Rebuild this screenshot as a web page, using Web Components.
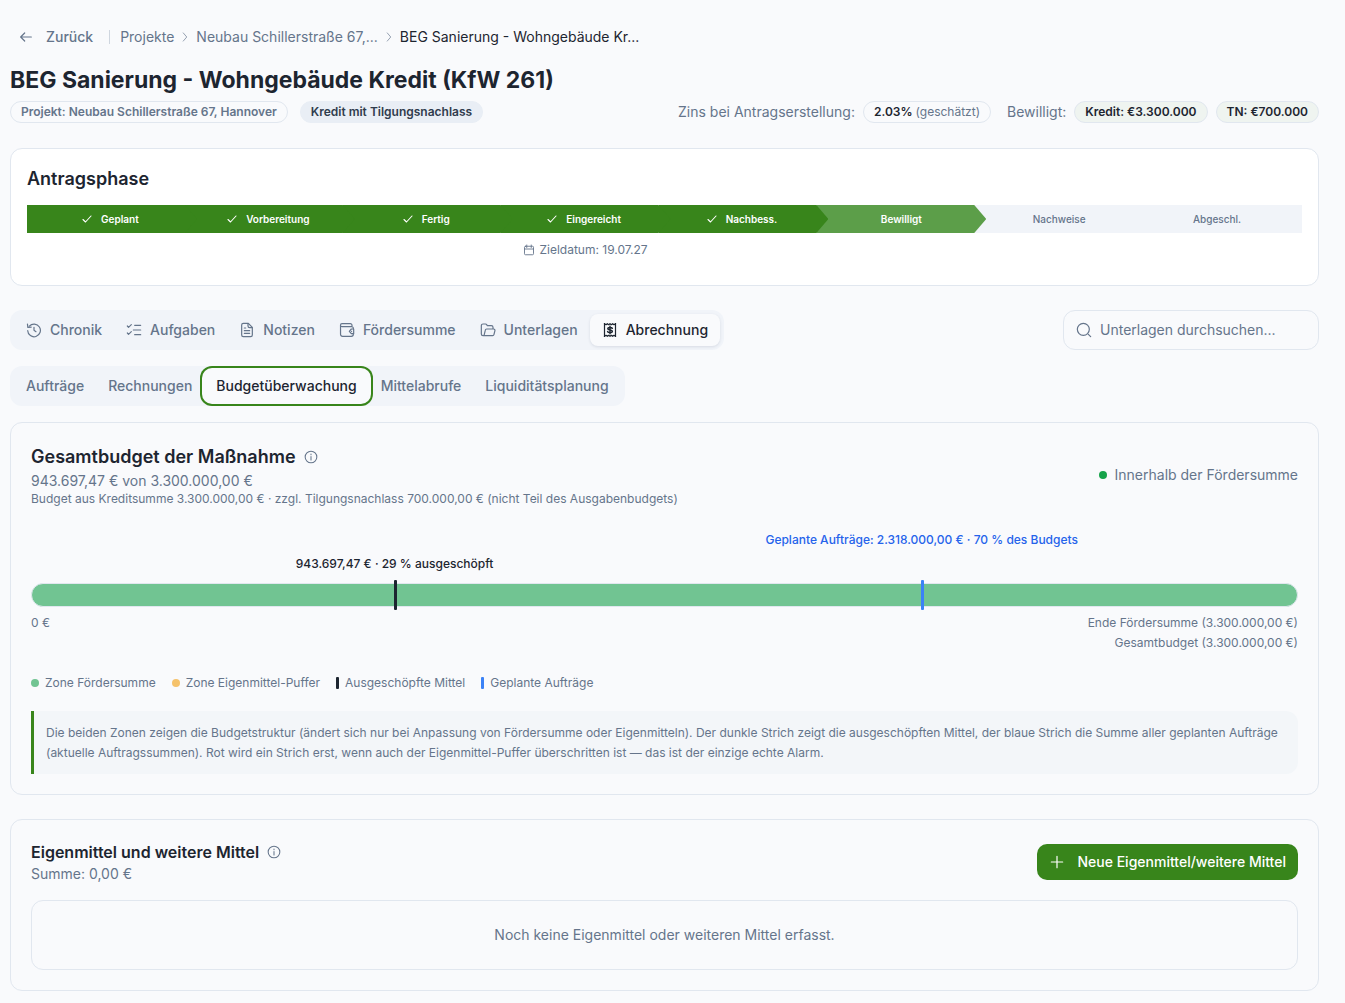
<!DOCTYPE html>
<html lang="de">
<head>
<meta charset="utf-8">
<meta name="viewport" content="width=device-width, initial-scale=1">
<title>BEG Sanierung - Wohngebäude Kredit (KfW 261)</title>
<style>
:root{
  --bg:#f9fafc; --fg:#1d2530; --muted:#65758b; --line:#e1e7ef; --soft:#f1f4f9;
  --green:#38851b; --green-light:#5c9e49; --zone:#71c492; --blue:#3b82f6;
}
body{margin:0;background:var(--bg);color:var(--fg);font:14px/20px Inter,"Liberation Sans",sans-serif}
</style>
</head>
<body>
<grant-page></grant-page>

<script>
const base = '*{box-sizing:border-box}button,input{font:inherit;color:inherit}button{margin:0;border:0;background:none;cursor:pointer}a{color:inherit;text-decoration:none}h1,h2,p{margin:0}';
function component(name, css, html) {
  const tpl = document.createElement('template');
  tpl.innerHTML = typeof html === 'string' ? `<style>${base}${css}</style>${html}` : '';
  customElements.define(name, class extends HTMLElement {
    constructor() {
      super();
      this.attachShadow({ mode: 'open' });
      if (typeof html === 'string') this.shadowRoot.append(tpl.content.cloneNode(true));
    }
    connectedCallback() {
      if (typeof html === 'function') this.shadowRoot.innerHTML = `<style>${base}${css}</style>${html(this)}`;
    }
  });
}

const icons = {
  back: '<path d="M20 12H4M10 6l-6 6 6 6"/>',
  chevron: '<path d="M9 5l6 7-6 7"/>',
  check: '<path d="M4 13l5 5L20 6"/>',
  calendar: '<rect x="3" y="4.5" width="18" height="17" rx="2"/><path d="M7.5 2v5M16.5 2v5M3 10h18"/>',
  history: '<path d="M5 6.3A9.5 9.5 0 1 1 2.6 13"/><path d="M2.2 3.2l.6 5 5-.5"/><path d="M12 8v4.5l3 2"/>',
  tasks: '<path d="M2 6l1.8 2L8 4M2 16.500l1.800 2L8 14.500M13 5h9M11 12h11M13 19h9"/>',
  note: '<path d="M4 4.500A2.500 2.500 0 0 1 6.500 2H14l6 6v11.500a2.500 2.500 0 0 1-2.500 2.500h-11A2.500 2.500 0 0 1 4 19.500z"/><path d="M13.500 2.500V6A2.500 2.500 0 0 0 16 8.500h3.500M8 9h2M8 13h8M8 17h8"/>',
  wallet: '<path d="M19.500 7V5a2.500 2.500 0 0 0-2.500-2.500H4.500a2.200 2.200 0 0 0 0 4.500H19a2.500 2.500 0 0 1 2.500 2.500V10M2.300 4.800V18.500A3 3 0 0 0 5.300 21.500H18.500a3 3 0 0 0 3-3V18"/><path d="M22 10.500h-3.500L15.500 14l3 3.500H22z"/><path d="M18.800 14h.1"/>',
  folder: '<path d="M6 20.500l2-8.300A2 2 0 0 1 10 10.500h10.500a2 2 0 0 1 1.900 2.500l-1.500 6a2 2 0 0 1-1.900 1.500H4.500A2.500 2.500 0 0 1 2 18V5.500A2.500 2.500 0 0 1 4.500 3H8.300a2 2 0 0 1 1.700 1l1 1.500H17a2.500 2.500 0 0 1 2.500 2.500v2.500"/>',
  receipt: '<path d="M3.750 1.500v21M20.250 1.500v21" stroke-linecap="butt"/><path d="M3.750 2.500L6 4l2-1.500L10 4l2-1.500L14 4l2-1.500L18 4l2.250-1.500M3.750 21.500L6 20l2 1.500 2-1.500 2 1.500 2-1.500 2 1.500 2-1.500 2.250 1.500"/><path d="M15.500 9.500C15 8.500 13.800 8.200 12 8.200c-2.200 0-3.300.7-3.300 1.900 0 2.700 6.800 1.200 6.800 3.900 0 1.200-1.300 1.900-3.500 1.900-1.900 0-3.100-.5-3.600-1.500M12 6.500v11" stroke-width="2.200"/>',
  search: '<circle cx="11" cy="11" r="9"/><path d="M18.500 18.500l3.500 3.500"/>',
  info: '<circle cx="12" cy="12" r="10"/><path d="M12 11v6M12 7v1.300"/>',
  plus: '<path d="M12 3.500v17M3.500 12h17"/>'
};
component('ui-icon',
  ':host{display:block;flex:none;width:var(--size,16px);height:var(--size,16px)}svg{display:block;width:100%;height:100%;fill:none;stroke:currentColor;stroke-width:var(--stroke,1.8);stroke-linecap:round;stroke-linejoin:round}',
  el => `<svg viewBox="0 0 24 24" aria-hidden="true">${icons[el.getAttribute('name')]}</svg>`);

component('crumb-trail', `
  :host{display:block;color:var(--muted)}
  nav{display:flex;align-items:center}
  button{display:flex;align-items:center;gap:12px;padding:0 16px 0 8px;font-weight:500}
  .bar{width:1px;height:14px;background:#cfd6df;margin-right:10px}
  .trail{display:flex;align-items:center;gap:4px}
  .trail ui-icon{--size:14px;color:#8f9bac;--stroke:1.6}
  [aria-current]{color:var(--fg)}
`, `<nav aria-label="Brotkrumen">
  <button type="button"><ui-icon name="back"></ui-icon>Zurück</button><span class="bar"></span>
  <div class="trail"><a href="#projekte">Projekte</a><ui-icon name="chevron"></ui-icon>
  <a href="#projekt">Neubau Schillerstraße 67,...</a><ui-icon name="chevron"></ui-icon>
  <span aria-current="page">BEG Sanierung - Wohngebäude Kr...</span></div>
</nav>`);

component('ui-pill', `
  :host{display:block;height:22px;padding:2px 10px;border:1px solid var(--line);border-radius:11px;font-size:12px;line-height:16px;font-weight:600;white-space:nowrap}
  :host([kind=muted]){color:var(--muted)}
  :host([kind=solid]){background:#e9eef5;border-color:#e9eef5;color:#303c4d}
  :host([kind=tint]){background:#eff4f0}
`, '<slot></slot>');

component('grant-header', `
  :host{display:block}
  h1{font-size:23px;line-height:32px;font-weight:700}
  .row{display:flex;justify-content:space-between;flex-wrap:wrap;gap:8px;margin-top:5px}
  .group{display:flex;align-items:center;gap:8px;color:var(--muted)}
  .tags{gap:12px}
  ui-pill{color:var(--fg)}
  ui-pill[kind=muted]{color:var(--muted)}
  ui-pill[kind=solid]{color:#303c4d}
  .next{margin-left:8px}
  small{font-size:12px;font-weight:400;color:var(--muted)}
`, `<h1>BEG Sanierung - Wohngebäude Kredit (KfW 261)</h1>
<div class="row">
  <div class="group tags"><ui-pill kind="muted">Projekt: Neubau Schillerstraße 67, Hannover</ui-pill><ui-pill kind="solid">Kredit mit Tilgungsnachlass</ui-pill></div>
  <div class="group"><span>Zins bei Antragserstellung:</span><ui-pill>2.03% <small>(geschätzt)</small></ui-pill>
  <span class="next">Bewilligt:</span><ui-pill kind="tint">Kredit: €3.300.000</ui-pill><ui-pill kind="tint">TN: €700.000</ui-pill></div>
</div>`);

component('ui-card', `
  :host{display:block;border:1px solid var(--line);border-radius:12px;padding:20px}
  :host([raised]){background:#fff;padding:16px}
`, '<slot></slot>');

component('phase-step', `
  :host{display:block;flex:1 1 0;min-width:0;margin-left:-12px}
  :host(:first-child){margin-left:0}
  .bar{display:flex;align-items:center;justify-content:center;gap:8px;height:28px;font-size:10px;line-height:12px;font-weight:600;color:#fff;background:var(--green);
    clip-path:polygon(0 0,calc(100% - 12px) 0,100% 50%,calc(100% - 12px) 100%,0 100%)}
  :host([state=done]) .bar{padding-right:4px}
  :host([state=current]) .bar{background:var(--green-light)}
  :host([state=open]) .bar{background:var(--soft);color:var(--muted);font-weight:500}
  :host(:last-child) .bar{clip-path:none}
  .bar ui-icon{--size:12px;--stroke:2.2}
  .note{display:flex;justify-content:center;align-items:center;gap:4px;min-height:20px;margin-top:7px;font-size:12px;color:var(--muted);white-space:nowrap}
  .note ui-icon{--size:12px}
`, el => `<div class="bar">${el.getAttribute('state') === 'done' ? '<ui-icon name="check"></ui-icon>' : ''}<span>${el.getAttribute('label')}</span></div>
  <div class="note">${el.hasAttribute('due') ? `<ui-icon name="calendar"></ui-icon><span>${el.getAttribute('due')}</span>` : ''}</div>`);

const phases = [['Geplant','done'],['Vorbereitung','done'],['Fertig','done'],['Eingereicht','done','Zieldatum: 19.07.27'],['Nachbess.','done'],['Bewilligt','current'],['Nachweise','open'],['Abgeschl.','open']];
component('phase-stepper', `
  :host{display:block;padding-bottom:9px}
  h2{font-size:18px;line-height:28px;font-weight:600}
  .steps{display:flex;margin-top:12px}
`, `<h2>Antragsphase</h2><div class="steps">${phases.map(([l,s,d],i) => `<phase-step style="z-index:${8-i}" label="${l}" state="${s}"${d ? ` due="${d}"` : ''}></phase-step>`).join('')}</div>`);

component('tab-item', `
  :host{display:block}
  button{display:flex;align-items:center;gap:8px;height:32px;padding:0 12px;border-radius:8px;font-weight:500;color:var(--muted);white-space:nowrap}
  :host([active]) button{background:var(--bg);color:var(--fg);box-shadow:0 1px 3px rgba(30,50,80,.12)}
  :host([ring]) button{background:var(--bg);color:var(--fg);box-shadow:0 0 0 2px var(--bg),0 0 0 4px var(--green)}
`, el => `<button type="button" role="tab" aria-selected="${el.hasAttribute('active') || el.hasAttribute('ring')}">${el.hasAttribute('icon') ? `<ui-icon name="${el.getAttribute('icon')}"></ui-icon>` : ''}<slot></slot></button>`);
component('tab-bar', ':host{display:flex;width:fit-content;padding:4px;border-radius:12px;background:var(--soft)}', '<slot></slot>');

component('search-field', `
  :host{display:block;width:256px}
  label{display:flex;align-items:center;gap:8px;height:40px;padding:0 12px;border:1px solid var(--line);border-radius:12px;color:var(--muted)}
  input{flex:1;min-width:0;border:0;padding:0;background:none;outline:0;color:var(--fg)}
  input::placeholder{color:var(--muted);opacity:1}
`, '<label><ui-icon name="search"></ui-icon><input type="search" aria-label="Unterlagen durchsuchen" placeholder="Unterlagen durchsuchen..."></label>');

component('budget-overview', `
  :host{display:block;color:var(--muted)}
  header{display:flex;justify-content:space-between;align-items:center}
  h2{display:flex;align-items:center;gap:8px;font-size:18px;line-height:28px;font-weight:600;color:var(--fg)}
  h2 ui-icon{--size:14px;color:var(--muted)}
  .fine{font-size:12px;line-height:16px}
  .state{display:flex;align-items:center;gap:8px}
  .state::before{content:"";width:8px;height:8px;border-radius:50%;background:#16a34a}
  .labels{display:grid;gap:8px;margin-top:25px;font-size:12px;line-height:16px;font-weight:500}
  .labels span{margin-left:var(--at);width:max-content;transform:translateX(-50%)}
  .plan{color:#2563eb}.spent{color:var(--fg)}
  .track{position:relative;height:24px;margin-top:11px;border:1px solid var(--line);border-radius:12px;background:var(--zone)}
  .track i{position:absolute;left:var(--at);top:-4px;width:3px;height:30px;border-radius:1px;background:var(--fg)}
  .track .b{background:var(--blue)}
  .axis{display:flex;justify-content:space-between;margin-top:6px;font-size:12px}
  .axis div{text-align:right}
  ul{display:flex;flex-wrap:wrap;gap:16px;margin:20px 0 0;padding:0;list-style:none;font-size:12px}
  li{display:flex;align-items:center;gap:6px}
  li::before{content:"";width:8px;height:8px;border-radius:50%;background:var(--c)}
  li.mark::before{width:3px;height:12px;border-radius:1px}
  .help{margin-top:18px;padding:12px 12px 11px;border-left:3px solid var(--green);border-radius:0 12px 12px 0;background:#f3f6f9;font-size:12px}
`, `<header><div>
  <h2>Gesamtbudget der Maßnahme <ui-icon name="info"></ui-icon></h2>
  <p>943.697,47 € von 3.300.000,00 €</p>
  <p class="fine">Budget aus Kreditsumme 3.300.000,00 € · zzgl. Tilgungsnachlass 700.000,00 € (nicht Teil des Ausgabenbudgets)</p>
</div><div class="state">Innerhalb der Fördersumme</div></header>
<div class="labels"><span class="plan" style="--at:70.3%">Geplante Aufträge: 2.318.000,00 € · 70 % des Budgets</span><span class="spent" style="--at:28.7%">943.697,47 € · 29 % ausgeschöpft</span></div>
<div class="track"><i style="--at:28.6%"></i><i class="b" style="--at:70.24%"></i></div>
<div class="axis"><span>0 €</span><div><p>Ende Fördersumme (3.300.000,00 €)</p><p>Gesamtbudget (3.300.000,00 €)</p></div></div>
<ul><li style="--c:var(--zone)">Zone Fördersumme</li><li style="--c:#f5c26b">Zone Eigenmittel-Puffer</li><li class="mark" style="--c:var(--fg)">Ausgeschöpfte Mittel</li><li class="mark" style="--c:var(--blue)">Geplante Aufträge</li></ul>
<p class="help">Die beiden Zonen zeigen die Budgetstruktur (ändert sich nur bei Anpassung von Fördersumme oder Eigenmitteln). Der dunkle Strich zeigt die ausgeschöpften Mittel, der blaue Strich die Summe aller geplanten Aufträge (aktuelle Auftragssummen). Rot wird ein Strich erst, wenn auch der Eigenmittel-Puffer überschritten ist — das ist der einzige echte Alarm.</p>`);

component('own-funds', `
  :host{display:block;color:var(--muted)}
  header{display:flex;justify-content:space-between;align-items:center}
  h2{display:flex;align-items:center;gap:8px;font-size:16px;line-height:24px;font-weight:600;color:var(--fg)}
  h2 ui-icon{--size:14px;color:var(--muted)}
  button{display:flex;align-items:center;gap:12px;height:36px;padding:0 12px;border-radius:10px;background:var(--green);color:#fff;font-weight:500}
  .empty{margin-top:16px;padding:24px;border:1px solid var(--line);border-radius:12px;text-align:center}
`, `<header><div><h2>Eigenmittel und weitere Mittel <ui-icon name="info"></ui-icon></h2><p>Summe: 0,00 €</p></div>
<button type="button"><ui-icon name="plus"></ui-icon>Neue Eigenmittel/weitere Mittel</button></header>
<div class="empty">Noch keine Eigenmittel oder weiteren Mittel erfasst.</div>`);

component('grant-page', `
  :host{display:block;padding:27px 26px 12px 10px}
  grant-header{margin-top:17px}
  ui-card{margin-top:24px}
  ui-card[raised]{margin-top:25px}
  .bar{display:flex;justify-content:space-between;align-items:center;gap:16px;margin-top:24px}
  .sub{margin-top:16px}
  .sub + ui-card{margin-top:16px}
`, `<crumb-trail></crumb-trail>
<grant-header></grant-header>
<main>
<ui-card raised><phase-stepper></phase-stepper></ui-card>
<div class="bar"><tab-bar role="tablist">
  <tab-item icon="history">Chronik</tab-item><tab-item icon="tasks">Aufgaben</tab-item><tab-item icon="note">Notizen</tab-item>
  <tab-item icon="wallet">Fördersumme</tab-item><tab-item icon="folder">Unterlagen</tab-item><tab-item icon="receipt" active>Abrechnung</tab-item>
</tab-bar><search-field></search-field></div>
<tab-bar class="sub" role="tablist"><tab-item>Aufträge</tab-item><tab-item>Rechnungen</tab-item><tab-item ring>Budgetüberwachung</tab-item><tab-item>Mittelabrufe</tab-item><tab-item>Liquiditätsplanung</tab-item></tab-bar>
<ui-card><budget-overview></budget-overview></ui-card>
<ui-card><own-funds></own-funds></ui-card>
</main>`);
</script>
</body>
</html>
